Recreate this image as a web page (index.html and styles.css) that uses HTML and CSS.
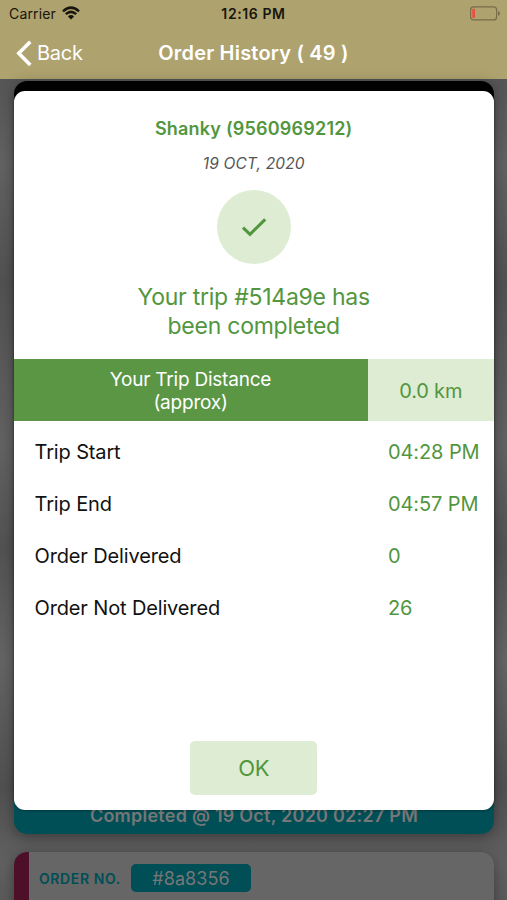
FILE: index.html
```html
<!DOCTYPE html>
<html lang="en">
<head>
<meta charset="utf-8">
<title>Order History</title>
<link rel="stylesheet" href="styles.css">
</head>
<body>
<div class="screen">
  <header class="top">
    <div class="status">
      <div class="carrier"><span>Carrier</span>
        <svg width="18" height="14" viewBox="0 0 18 14" fill="none" stroke="#17150c"><path d="M1 5.3Q9-2 17 5.3M3.8 8.1Q9 3.6 14.2 8.1" stroke-width="2.5"/><path d="M5.9 10.4Q9 7.6 12.1 10.4L9 13.5Z" fill="#17150c" stroke="none"/></svg>
      </div>
      <span class="clock">12:16 PM</span>
      <svg class="battery" width="31" height="15" viewBox="0 0 31 15"><rect x="1.6" y=".9" width="26" height="13" rx="3" fill="none" stroke="#776d49" stroke-width="1.2"/><rect x="3.3" y="2.8" width="2.7" height="9.2" rx="1" fill="#ef4a3e"/><path d="M29 5q2 .6 2 2.4t-2 2.4z" fill="#776d49"/></svg>
    </div>
    <nav class="nav">
      <div class="back"><svg width="17" height="27" viewBox="0 0 17 27"><path d="M15.3 1.7 3.8 13.3 15.3 24.9" fill="none" stroke="#fff" stroke-width="3.6"/></svg><span>Back</span></div>
      <h1>Order History ( 49 )</h1>
    </nav>
  </header>
  <main class="orders">
    <section class="order done"><p>Completed @ 19 Oct, 2020 02:27 PM</p></section>
    <section class="order next"><div class="stripe"></div><b>ORDER NO.</b><span class="tag">#8a8356</span></section>
    <div class="dialog">
      <h2>Shanky (9560969212)</h2>
      <p class="date">19 OCT, 2020</p>
      <div class="check"><svg width="26" height="20" viewBox="0 0 26 20"><path d="M2 10.7 9 17.3 24.2 2.3" fill="none" stroke="#52963e" stroke-width="3.1"/></svg></div>
      <p class="message">Your trip #514a9e has<br>been completed</p>
      <div class="distance"><div class="label"><span>Your Trip Distance<br>(approx)</span></div><div class="km"><span>0.0 km</span></div></div>
      <dl>
        <dt>Trip Start</dt><dd>04:28 PM</dd>
        <dt>Trip End</dt><dd>04:57 PM</dd>
        <dt>Order Delivered</dt><dd>0</dd>
        <dt>Order Not Delivered</dt><dd>26</dd>
      </dl>
      <button>OK</button>
    </div>
  </main>
</div>
</body>
</html>
```
FILE: styles.css
```css
* { box-sizing: border-box; }
body, h1, h2, p, dl, dd { margin: 0; }
body { font-family: Inter, "Liberation Sans", sans-serif; }
.screen { width: 507px; height: 900px; overflow: hidden; display: flex; flex-direction: column; }
.top { height: 79px; background: #aea26e; flex: none; }
.status { height: 27px; display: grid; grid-template-columns: 1fr auto 1fr; align-items: center; padding: 0 7px 0 9px; color: #17150c; font-size: 14px; }
.carrier { display: flex; align-items: center; gap: 6px; letter-spacing: 0.15px; }
.carrier svg { margin-top: -2px; }
.clock { font-weight: 600; letter-spacing: 0.6px; margin-right: 2px; }
.battery { justify-self: end; }
.nav { height: 52px; display: grid; grid-template-columns: 1fr auto 1fr; align-items: center; padding: 0 15px; color: #fff; }
.back { display: flex; align-items: center; gap: 5px; font-size: 20px; letter-spacing: -0.25px; }
h1 { font-size: 20px; font-weight: 600; letter-spacing: 0.2px; }
.orders { position: relative; flex: 1; padding: 2px 13px 0 14px; background: linear-gradient(#555 0, #626262 10%, #515151 24%, #626262 43%, #525252 55%, #646464 68%, #505050 83%, #606060 92%, #555 100%); }
.order { border-radius: 13px; box-shadow: 0 3px 14px rgba(0, 0, 0, 0.35); }
.done { height: 753px; display: flex; align-items: flex-end; justify-content: center; background: linear-gradient(#000 60px, #004e56 60px); color: #777; font-size: 18px; font-weight: 600; letter-spacing: 0.24px; line-height: 20px; padding-bottom: 8px; }
.next { margin-top: 18px; height: 80px; display: flex; align-items: flex-start; background: #666; overflow: hidden; }
.stripe { width: 15px; height: 80px; background: #4e1029; }
.next b { margin: 18px 0 0 10px; width: 92px; font-size: 14px; line-height: 18px; font-weight: 600; letter-spacing: 0.6px; color: #004e56; }
.tag { width: 120px; height: 28px; margin-top: 12px; border-radius: 5px; background: #004e56; color: #777; font-size: 18px; line-height: 29px; text-align: center; letter-spacing: 0.1px; }
.dialog { position: absolute; left: 13.5px; right: 13px; top: 12px; height: 719px; border-radius: 11px; background: #fff; color: #52963e; display: flex; flex-direction: column; align-items: center; padding-top: 26px; box-shadow: 0 0 3px rgba(0, 0, 0, 0.5); }
h2 { font-size: 18px; line-height: 24px; font-weight: 600; letter-spacing: 0.2px; }
.date { margin-top: 12px; font-size: 15.5px; line-height: 21px; font-style: italic; color: #555; letter-spacing: 0.15px; }
.check { width: 74px; height: 74px; margin-top: 16px; border-radius: 50%; background: #ddecd3; display: flex; align-items: center; justify-content: center; }
.message { margin-top: 19px; font-size: 23px; line-height: 29px; text-align: center; letter-spacing: -0.25px; }
.distance { width: 100%; height: 62px; margin-top: 18px; display: flex; font-size: 19px; line-height: 23px; text-align: center; }
.label { width: 354px; background: #5b9645; color: #fff; display: grid; place-items: center; padding-top: 2px; letter-spacing: -0.22px; }
.km { flex: 1; background: #ddecd3; display: grid; place-items: center; font-size: 20px; letter-spacing: -0.2px; padding-top: 2px; }
dl { width: 100%; padding: 5px 0 0 21px; display: grid; grid-template-columns: 353.5px 1fr; grid-auto-rows: 51.9px; align-items: center; font-size: 20px; }
dt { color: #111; letter-spacing: -0.14px; }
dd { white-space: nowrap; letter-spacing: -0.1px; }
button { width: 127px; height: 54px; margin-top: 107px; border: 0; border-radius: 5px; background: #ddecd3; color: #52963e; font: 22px Inter, sans-serif; letter-spacing: -0.3px; }
```
